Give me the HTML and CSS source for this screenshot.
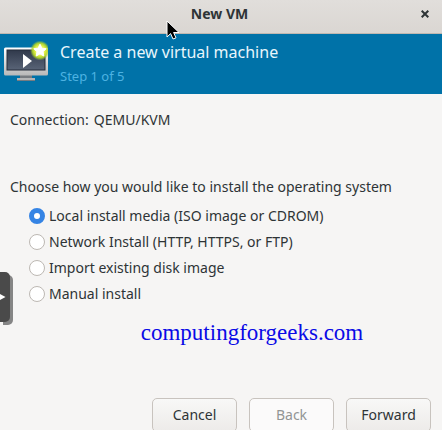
FILE: index.html
```
<!DOCTYPE html>
<html lang="en">
<head>
  <meta charset="UTF-8">
  <meta name="viewport" content="width=device-width, initial-scale=1.0">
  <title>New VM</title>
  <link rel="stylesheet" href="styles.css">
</head>
<body>
  <div class="titlebar">
    <h1>New VM</h1>
    <button type="button" class="close" aria-label="Close">
      <svg width="8" height="8" viewBox="0 0 8 8"><path d="M0.7 0.7L7.3 7.3M7.3 0.7L0.7 7.3" stroke="#2e3436" stroke-width="2"/></svg>
    </button>
  </div>

  <header class="banner">
    <svg class="vm-icon" width="48" height="48" viewBox="0 0 48 48">
      <defs>
        <linearGradient id="screen" x1="0" y1="0" x2="0" y2="1">
          <stop offset="0" stop-color="#30394b"/>
          <stop offset="1" stop-color="#596477"/>
        </linearGradient>
        <linearGradient id="frame" x1="0" y1="0" x2="0" y2="1">
          <stop offset="0" stop-color="#ffffff"/>
          <stop offset="1" stop-color="#b8b8b8"/>
        </linearGradient>
        <radialGradient id="glow">
          <stop offset="0.5" stop-color="#e4f24a"/>
          <stop offset="0.75" stop-color="#b5d82a" stop-opacity="0.9"/>
          <stop offset="1" stop-color="#8fc43a" stop-opacity="0"/>
        </radialGradient>
      </defs>
      <path d="M20 37h12v3h3v3H17v-3h3z" fill="#777b80"/>
      <path d="M17 41h18" stroke="#c8c8c8" stroke-width="1.5"/>
      <rect x="4" y="9.500" width="44" height="28" rx="1.5" fill="url(#frame)"/>
      <rect x="7" y="12" width="38" height="20" fill="url(#screen)" stroke="#252c3a"/>
      <path d="M23 16l9 7-9 7z" fill="#fff"/>
      <circle cx="40" cy="12.500" r="10" fill="url(#glow)"/>
      <path d="M40 6.200l1.900 3.900 4.300.6-3.100 3 .7 4.300-3.800-2.100-3.800 2.100.7-4.300-3.100-3 4.300-.6z" fill="#fff" stroke="#fff" stroke-linejoin="round"/>
    </svg>
    <div>
      <h2>Create a new virtual machine</h2>
      <p>Step 1 of 5</p>
    </div>
  </header>

  <form class="wizard">
    <p class="connection"><span>Connection:</span><span>QEMU/KVM</span></p>

    <fieldset>
      <legend>Choose how you would like to install the operating system</legend>
      <label><input type="radio" name="method" checked>Local install media (ISO image or CDROM)</label>
      <label><input type="radio" name="method">Network Install (HTTP, HTTPS, or FTP)</label>
      <label><input type="radio" name="method">Import existing disk image</label>
      <label><input type="radio" name="method">Manual install</label>
    </fieldset>

    <p class="watermark">computingforgeeks.com</p>

    <div class="actions">
      <button type="button">Cancel</button>
      <button type="button" disabled>Back</button>
      <button type="button">Forward</button>
    </div>
  </form>

  <button type="button" class="panel-handle" aria-label="Open panel">
    <svg width="6" height="8" viewBox="0 0 6 8"><path d="M0 1l5.500 3L0 7z" fill="#fff"/></svg>
  </button>

  <svg class="cursor" width="14" height="20" viewBox="0 0 14 20">
    <path d="M1 1v16l3.600-3.400 2.400 5.400 3-1.200-2.400-5.300H13z" fill="#000" stroke="#fff"/>
  </svg>
</body>
</html>
```
FILE: styles.css
```
* {
  box-sizing: border-box;
}

body {
  font-family: "Noto Sans", "Open Sans", sans-serif;
  font-size: 14px;
  line-height: 20px;
  color: #2e3436;
  background: #f6f5f4;
  margin: 0;
  height: 100vh;
  overflow: hidden;
}

h1, h2, p {
  margin: 0;
}

.titlebar {
  display: grid;
  grid-template-columns: 1fr auto 1fr;
  align-items: center;
  height: 34px;
  padding: 0 8px 6px 5px;
  background: linear-gradient(#e1dedb, #dad6d2);
  border-bottom: 1px solid #bfb8b1;
}

.titlebar h1 {
  grid-column: 2;
  font-size: 14px;
}

.close {
  justify-self: end;
  display: flex;
  padding: 5px;
  border: none;
  background: none;
}

.banner {
  display: flex;
  gap: 12px;
  height: 60px;
  padding-top: 4px;
  background: #0072a8;
}

.banner h2 {
  font-size: 16px;
  font-weight: normal;
  line-height: 28px;
  color: #e8f6fc;
}

.banner p {
  font-size: 13px;
  color: #4db2e2;
}

.wizard {
  padding: 16px 11px 16px 10px;
}

.connection {
  display: flex;
  gap: 5px;
}

fieldset {
  display: flex;
  flex-direction: column;
  gap: 6px;
  margin: 47px 0 0;
  padding: 0;
  border: none;
}

legend {
  padding: 0;
  margin-bottom: 9px;
}

label {
  display: flex;
  align-items: center;
  gap: 4px;
  padding-left: 19px;
}

input[type="radio"] {
  appearance: none;
  width: 16px;
  height: 16px;
  margin: 0;
  border: 1px solid #bdb8b3;
  border-radius: 50%;
  background: #fff;
}

input[type="radio"]:checked {
  border: 5px solid #3584e4;
}

.watermark {
  margin-top: 15px;
  padding-left: 63px;
  text-align: center;
  font-family: "Liberation Serif", serif;
  font-size: 23px;
  line-height: 28px;
  color: #0a0ae6;
}

.actions {
  display: flex;
  justify-content: flex-end;
  gap: 12px;
  margin-top: 51px;
}

.actions button {
  width: 85px;
  height: 34px;
  font: inherit;
  color: #2e3436;
  background: linear-gradient(#f8f8f7, #edebe9);
  border: 1px solid #c8c3be;
  border-radius: 5px;
}

.actions button:disabled {
  color: #929595;
  background: #fbfafa;
}

.panel-handle {
  position: absolute;
  top: 272px;
  left: 0;
  display: flex;
  align-items: center;
  width: 10px;
  height: 50px;
  padding: 0;
  border: none;
  border-radius: 0 5px 5px 0;
  background: #4a4a4a;
  box-shadow: 3px 3px 0 #858585;
}

.cursor {
  position: absolute;
  top: 20px;
  left: 166px;
}
```
